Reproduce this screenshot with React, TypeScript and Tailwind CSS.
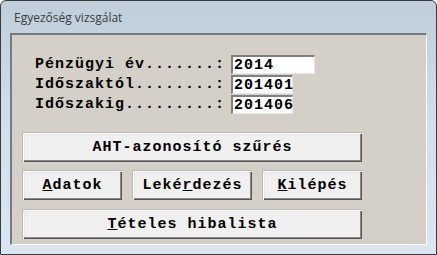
import React from 'react';

const mono = "font-['Liberation_Mono','Courier_New',monospace] font-bold text-[15px] tracking-[1px] text-black";

const Field = ({ label, value, wide }: { label: string; value: string; wide?: boolean }) => (
  <div className="flex items-center h-[19px]">
    <span className={`${mono} w-[196px] leading-none whitespace-pre`}>{label}</span>
    <div
      className={`${wide ? 'w-[84px]' : 'w-[62px]'} h-[19px] bg-white border-t-2 border-l-2 border-[#808080] border-r border-b border-r-[#e8e8e8] border-b-[#e8e8e8] flex items-center pl-[1px]`}
    >
      <span className={`${mono} leading-none`}>{value}</span>
    </div>
  </div>
);

const Btn = ({ children, w }: { children: React.ReactNode; w: string }) => (
  <button
    className={`${w} h-[30px] bg-[#f0f0f0] flex items-center justify-center ${mono} leading-none shadow-[inset_1px_1px_0_#ffffff,inset_-1px_-1px_0_#555555,inset_-2px_-2px_0_#8a8a8a,inset_2px_2px_0_#e6e6e6] border-t border-l border-[#b8b8b8]`}
  >
    {children}
  </button>
);

export default function App() {
  return (
    <div className="w-[437px] h-[255px] flex flex-col rounded-t-[6px] border border-[#3a3a3a] bg-gradient-to-b from-[#bfcedb] via-[#d2dfec] to-[#dbe6f3]">
      <div className="h-[32px] pl-[13px] flex items-center font-['Open_Sans','Noto_Sans',sans-serif] text-[12px] text-[#3c3c3c] pt-[2px]">
        Egyezőség vizsgálat
      </div>
      <div className="mx-[9px] mb-[9px] flex-1 bg-[#d4d0c8] border-t-2 border-l-2 border-[#7a7a7a] border-r border-b border-r-white border-b-white flex flex-col">
        <div className="pl-[23px] pt-[20px] flex flex-col">
          <Field label="Pénzügyi év.......:" value="2014" wide />
          <div className="h-[1px]" />
          <Field label="Időszaktól........:" value="201401" />
          <div className="h-[1px]" />
          <Field label="Időszakig.........:" value="201406" />
        </div>
        <div className="pl-[10px] pt-[18px] flex flex-col gap-[8px]">
          <Btn w="w-[340px]">AHT-azonosító szűrés</Btn>
          <div className="flex gap-[10px]">
            <Btn w="w-[100px]"><span><u>A</u>datok</span></Btn>
            <Btn w="w-[120px]"><span>Leké<u>r</u>dezés</span></Btn>
            <Btn w="w-[100px]"><span><u>K</u>ilépés</span></Btn>
          </div>
          <div className="pt-[1px]">
            <Btn w="w-[340px]"><span><u>T</u>ételes hibalista</span></Btn>
          </div>
        </div>
      </div>
    </div>
  );
}
